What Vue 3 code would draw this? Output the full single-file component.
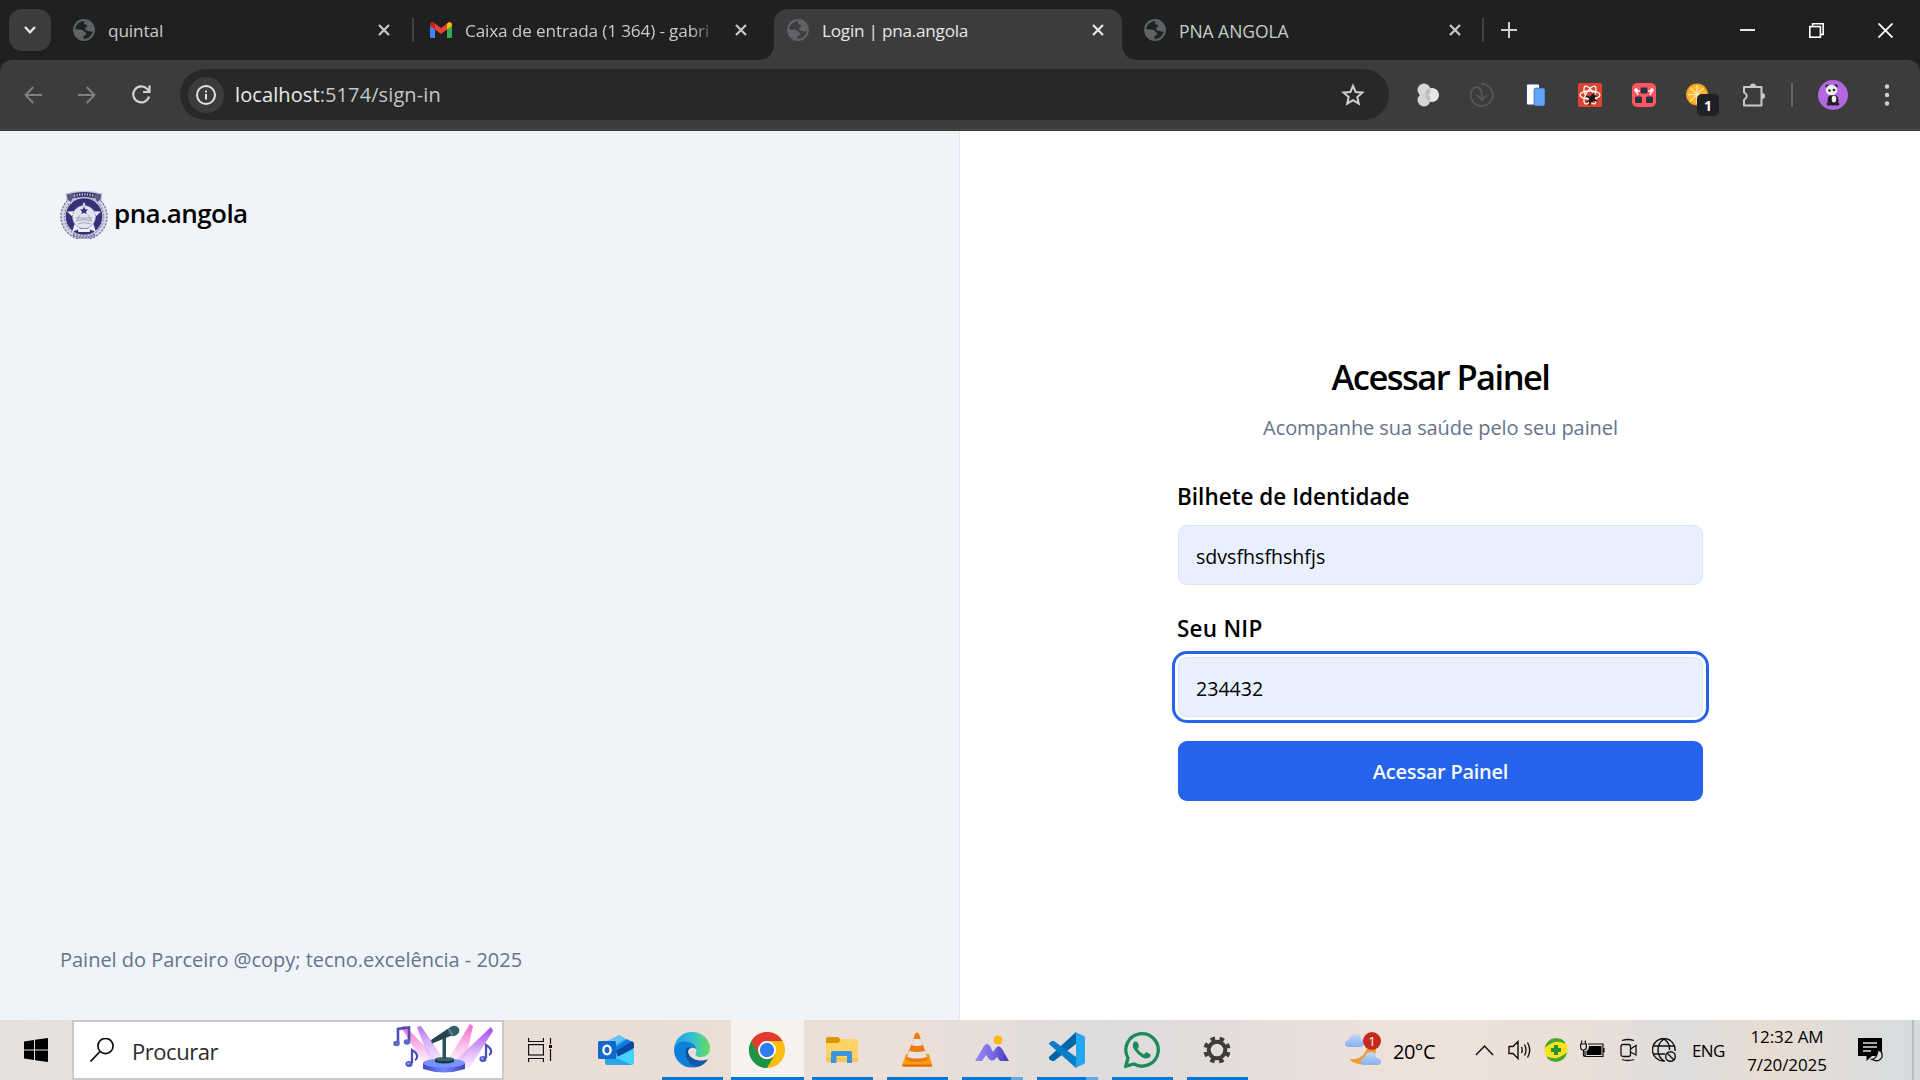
<script setup>
import { ref } from 'vue'

const identity = ref('sdvsfhsfhshfjs')
const nip = ref('234432')
</script>

<template>
  <div class="screen">
    <svg class="defs" width="0" height="0">
      <defs>
        <symbol id="globe" viewBox="0 0 22 22">
          <circle cx="11" cy="11" r="9.9" fill="none" stroke="#5f6368" stroke-width="2" />
          <path d="M11 1 A10 10 0 0 1 20.800 12 Q18 13.500 16 12 Q13 12.500 12 10 Q12 8 14 7.500 Q15 5.500 12.500 5.500 Q10 5 11.500 3 Z M1.200 10 L6.500 10.500 Q11 10.500 11.500 13 Q14 13.500 13 16 L10.500 17 L10.300 21 A10 10 0 0 1 1.200 10 Z" fill="#5f6368" />
        </symbol>
        <symbol id="close" viewBox="0 0 14 14">
          <path d="M2 2 L12 12 M12 2 L2 12" fill="none" stroke="currentColor" stroke-width="2.2" />
        </symbol>
        <symbol id="note" viewBox="0 0 14 20">
          <path d="M7 15 V2 Q12 5 12 8 Q12.500 11 10 12" fill="none" stroke="#4a4fb4" stroke-width="2.300" />
          <ellipse cx="4" cy="16" rx="3.600" ry="3" fill="#4f55bf" />
          <ellipse cx="3.500" cy="15.500" rx="1.600" ry="1.200" fill="#8e96ea" />
        </symbol>
        <linearGradient id="cloud" x1="0" y1="0" x2="0" y2="1"><stop offset="0" stop-color="#c9dcfa" /><stop offset=".5" stop-color="#a4c3f2" /><stop offset="1" stop-color="#8ab0ee" /></linearGradient>
      </defs>
    </svg>

    <header class="tabs">
      <button class="tab-search"><svg width="14" height="10" viewBox="0 0 14 10"><path d="M2 2 L7 7.300 L12 2" fill="none" stroke="#e6e6e6" stroke-width="2.300" /></svg></button>
      <div class="tab first">
        <svg class="fav"><use href="#globe" /></svg>
        <span class="tab-name">quintal</span>
        <svg class="x"><use href="#close" /></svg>
      </div>
      <i class="sep"></i>
      <div class="tab mail">
        <svg class="fav" viewBox="0 0 22 22">
          <path d="M0 5 L5 8.500 V19 H1.500 Q0 19 0 17.500 Z" fill="#4285f4" />
          <path d="M17 8.500 L22 5 V17.500 Q22 19 20.500 19 H17 Z" fill="#34a853" />
          <path d="M5 4.500 L11 9 L17 4.500 V10.500 L11 15 L5 10.500 Z" fill="#ea4335" />
          <path d="M0 5.500 Q0 3 2.300 3 Q3.500 3 5 4.500 V10.500 L0 7 Z" fill="#c5221f" />
          <path d="M17 4.500 Q18.500 3 19.700 3 Q22 3 22 5.500 V7 L17 10.500 Z" fill="#fbbc04" />
        </svg>
        <span class="tab-name faded">Caixa de entrada (1 364) - gabri</span>
        <svg class="x"><use href="#close" /></svg>
      </div>
      <div class="tab active">
        <svg class="fav"><use href="#globe" /></svg>
        <span class="tab-name">Login | pna.angola</span>
        <svg class="x"><use href="#close" /></svg>
      </div>
      <div class="tab last">
        <svg class="fav"><use href="#globe" /></svg>
        <span class="tab-name">PNA ANGOLA</span>
        <svg class="x"><use href="#close" /></svg>
      </div>
      <i class="sep"></i>
      <svg class="plus" width="16" height="16" viewBox="0 0 16 16"><path d="M8 0 V16 M0 8 H16" stroke="#d0d0d0" stroke-width="2" /></svg>
      <div class="window-controls">
        <svg width="15" height="15" viewBox="0 0 15 15"><path d="M0 7 H15" stroke="#fff" stroke-width="1.800" /></svg>
        <svg width="15" height="15" viewBox="0 0 15 15" fill="none" stroke="#fff" stroke-width="1.600"><rect x=".8" y="3.600" width="10.600" height="10.600" /><path d="M3.600 3.600 V.8 H14.200 V11.400 H11.400" /></svg>
        <svg width="15" height="15" viewBox="0 0 15 15"><path d="M.5 .5 L14.500 14.500 M14.500 .5 L.5 14.500" stroke="#fff" stroke-width="1.800" /></svg>
      </div>
    </header>

    <div class="toolbar-wrap">
      <div class="toolbar">
        <div class="nav">
          <svg width="18" height="18" viewBox="0 0 18 18" fill="none" stroke="#7e7e7e" stroke-width="2"><path d="M18 9 H2 M9.300 1 L1.500 9 L9.300 17" /></svg>
          <svg width="18" height="18" viewBox="0 0 18 18" fill="none" stroke="#7e7e7e" stroke-width="2"><path d="M0 9 H16 M8.700 1 L16.500 9 L8.700 17" /></svg>
          <svg width="19" height="19" viewBox="0 0 19 19" fill="none" stroke="#d2d2d2" stroke-width="2.200"><path d="M17 11.500 A8 8 0 1 1 15.200 4 L17.500 6.500 M17.500 .5 V7 H11" /></svg>
        </div>
        <div class="omnibox">
          <span class="info"><svg width="20" height="20" viewBox="0 0 20 20"><circle cx="10" cy="10" r="9" fill="none" stroke="#e3e3e3" stroke-width="2" /><path d="M10 9 V14.500 M10 5.500 V7.500" stroke="#e3e3e3" stroke-width="2" /></svg></span>
          <span class="url"><b>localhost</b>:5174/sign-in</span>
          <svg class="star" width="24" height="24" viewBox="0 0 24 24"><path d="M12 2.800 L14.600 9 L21.400 9.600 L16.300 14 L17.800 20.700 L12 17.200 L6.200 20.700 L7.700 14 L2.600 9.600 L9.400 9 Z" fill="none" stroke="#d0d0d0" stroke-width="2" /></svg>
        </div>
        <div class="extensions">
          <svg viewBox="0 0 24 24"><circle cx="8" cy="7" r="6.500" fill="#d8d8d8" /><circle cx="8" cy="17" r="6.500" fill="#d4d4d4" /><circle cx="16" cy="12" r="7" fill="#e6e6e6" /><path d="M9.200 11 Q10 6.500 13.500 5.600 Q15.500 9 13.200 11 Q11 13 9.200 11 Z M9.200 12.800 Q12 10.800 13.500 13 Q15.500 15.500 13.500 18.400 Q9.500 17 9.200 12.800 Z" fill="#bdbdbd" /></svg>
          <svg viewBox="0 0 24 24" fill="none" stroke="#565656" stroke-width="1.800"><path d="M11 1 A11 11 0 1 1 2 7 Q6 2 10 6 Q12 8 12 16 M7 12 L12 17 L17 12" /></svg>
          <svg viewBox="0 0 24 24"><rect x="2.500" y="1" width="13" height="21" rx="1.500" fill="#fff" stroke="#2c4e78" /><rect x="10" y="5" width="11" height="18" rx="2" fill="#62a4f7" stroke="#2e558a" stroke-width=".6" /></svg>
          <svg viewBox="0 0 24 24"><rect width="24" height="24" rx="1.500" fill="#d9432f" /><g fill="none" stroke="#fff" stroke-width="1.300"><ellipse cx="12" cy="12" rx="10" ry="4" /><ellipse cx="12" cy="12" rx="10" ry="4" transform="rotate(60 12 12)" /><ellipse cx="12" cy="12" rx="10" ry="4" transform="rotate(120 12 12)" /></g><ellipse cx="14" cy="15.500" rx="2.600" ry="4.500" transform="rotate(30 14 15.500)" fill="#1c1414" /><path d="M8 13 L19 18 M9 19 L18 13 M11 22 L16 10" stroke="#1c1414" stroke-width="1.400" /></svg>
          <svg viewBox="0 0 24 24"><rect width="24" height="24" rx="5" fill="#ff5661" /><g fill="#26343f"><rect x="8.500" y="4.500" width="7" height="6" rx="1" /><rect x="3" y="13.500" width="7" height="6.500" rx="1" /><rect x="14" y="13.500" width="7" height="6.500" rx="1" /></g><path d="M3 8 H8 M16 8 H21 M4 8 L6 12 M20 8 L18 12" stroke="#fff" stroke-width="1.500" /><circle cx="4" cy="7" r="1.800" fill="#fff" /><circle cx="20" cy="7" r="1.800" fill="#fff" /></svg>
          <span class="orange"><svg viewBox="0 0 24 24"><circle cx="11" cy="11.500" r="11" fill="#f59c1a" /><circle cx="11" cy="11.500" r="9.500" fill="#ffb52e" /><path d="M11 2 V21 M1.500 11.500 H20.500 M4.300 4.800 L17.700 18.200 M17.700 4.800 L4.300 18.200" stroke="#ffe9b8" stroke-width="1.200" /></svg><b>1</b></span>
          <svg class="puzzle" viewBox="0 0 24 24"><path d="M2 4 H19.500 V22.500 H2 V17 Q7.500 13 2 9.200 Z" fill="none" stroke="#c9c9c9" stroke-width="2" stroke-linejoin="round" /><path d="M8 3.500 A3 3 0 0 1 14 3.500 Z M20 10 A3 3 0 0 1 20 16 Z" fill="#c9c9c9" /></svg>
        </div>
        <i class="bar"></i>
        <svg class="avatar" width="30" height="30" viewBox="0 0 30 30"><circle cx="15" cy="15" r="15" fill="#b567df" /><ellipse cx="15" cy="20" rx="5.500" ry="5.500" fill="#1f1b22" /><ellipse cx="16" cy="19" rx="2.300" ry="3.500" fill="#eee" /><circle cx="9.500" cy="6.500" r="2" fill="#29252b" /><circle cx="18" cy="6" r="1.800" fill="#29252b" /><ellipse cx="13.500" cy="10" rx="5.800" ry="5.200" fill="#eee" /><ellipse cx="11.500" cy="10.500" rx="1.300" ry="1.300" fill="#29252b" /><ellipse cx="16" cy="10" rx="1.300" ry="1.300" fill="#29252b" /><ellipse cx="11" cy="24" rx="2.500" ry="1.800" fill="#29252b" /><ellipse cx="19" cy="24" rx="2.500" ry="1.800" fill="#29252b" /></svg>
        <svg class="dots" width="6" height="24" viewBox="0 0 6 24" fill="#d0d0d0"><circle cx="3" cy="3.500" r="2.200" /><circle cx="3" cy="12" r="2.200" /><circle cx="3" cy="20.500" r="2.200" /></svg>
      </div>
    </div>

    <main class="page">
      <section class="brand-panel">
        <div class="brand">
          <svg width="48" height="48" viewBox="0 0 48 48">
            <circle cx="24" cy="26" r="21" fill="#34317a" />
            <circle cx="24" cy="25.500" r="21" fill="none" stroke="#d3d4e2" stroke-width="5.500" />
            <circle cx="24" cy="25.500" r="23" fill="none" stroke="#6f6e98" stroke-width="1.200" stroke-dasharray="2 1.500" />
            <circle cx="24" cy="25.500" r="19.500" fill="none" stroke="#8f8eb0" stroke-width="1.400" stroke-dasharray="2 1.300" />
            <path d="M24 11 L28 20 L41 20.500 L32 29 L36 41 L24 36 L12 41 L16 29 L7 20.500 L20 20 Z" fill="#eef0f7" />
            <circle cx="24" cy="26" r="11.500" fill="#e1e3ed" stroke="#8c8cb0" stroke-width="1" stroke-dasharray="2 1" />
            <path d="M24 15.500 L25.200 18.200 L28 18.500 L26 20.500 L26.500 23 L24 21.800 L21.500 23 L22 20.500 L20 18.500 L22.800 18.200 Z" fill="#34317a" />
            <path d="M16 27 H32 M16 30 Q24 27 32 30 M18 33 Q24 30 31 33 M20 24 L17 29 M28 24 L31 29" fill="none" stroke="#9c9dba" stroke-width=".9" />
            <path d="M6 3 Q24 -2 42 3 L41 9 L37 12 L35 8 Q24 5 13 8 L11 12 L7 9 Z" fill="#5a5988" stroke="#c8c9dc" stroke-width="1.200" />
            <path d="M14 4.800 Q24 2 34 4.800" stroke="#29285e" stroke-width="4" fill="none" />
            <path d="M14 4.800 Q24 2 34 4.800" stroke="#c9cadb" stroke-width="2.500" stroke-dasharray="1.200 1.400" fill="none" />
            <rect x="18" y="38" width="12" height="3" rx="1" fill="#f1f2f8" />
            <path d="M13 44 Q24 49 35 44" stroke="#6a6994" stroke-width="2" stroke-dasharray="2 1" fill="none" />
          </svg>
          <span>pna.angola</span>
        </div>
        <footer>Painel do Parceiro @copy; tecno.excelência - 2025</footer>
      </section>
      <section class="form-panel">
        <form @submit.prevent>
          <h1>Acessar Painel</h1>
          <p>Acompanhe sua saúde pelo seu painel</p>
          <label for="identity">Bilhete de Identidade</label>
          <input id="identity" v-model="identity" type="text" />
          <label for="nip" class="second">Seu NIP</label>
          <input id="nip" v-model="nip" class="focused" type="text" />
          <button class="submit">Acessar Painel</button>
        </form>
      </section>
    </main>

    <footer class="taskbar">
      <div class="start"><svg width="24" height="24" viewBox="0 0 24 24"><path d="M0 3.400 L10 2 V11.500 H0 Z M11 1.800 L24 0 V11.500 H11 Z M0 12.500 H10 V22 L0 20.600 Z M11 12.500 H24 V24 L11 22.200 Z" /></svg></div>
      <div class="search">
        <svg width="24" height="24" viewBox="0 0 24 24" fill="none" stroke="#111" stroke-width="1.700"><circle cx="15.500" cy="8" r="7.600" /><path d="M10 13.500 L.5 23.500" /></svg>
        <span>Procurar</span>
        <svg class="promo" width="102" height="52" viewBox="0 0 102 52">
          <defs>
            <linearGradient id="pinkBeam" x1="0" y1="0" x2="0" y2="1"><stop stop-color="#f560c8" /><stop offset="1" stop-color="#fde8fa" stop-opacity=".6" /></linearGradient>
            <linearGradient id="violetBeam" x1="0" y1="0" x2="0" y2="1"><stop stop-color="#a13df0" /><stop offset="1" stop-color="#f8e6fd" stop-opacity=".6" /></linearGradient>
            <linearGradient id="stage" x1="0" y1="0" x2="1" y2="0"><stop stop-color="#4748c4" /><stop offset=".5" stop-color="#6e86ff" /><stop offset="1" stop-color="#4344bb" /></linearGradient>
          </defs>
          <path d="M8 4 L12 3 L46 38 L30 40 Z" fill="url(#pinkBeam)" />
          <path d="M24 4 L28 3 L52 38 L38 42 Z" fill="url(#violetBeam)" opacity=".75" />
          <path d="M77 1 L80 3 L72 40 L54 38 Z" fill="url(#pinkBeam)" />
          <path d="M98 4 L100 8 L76 46 L62 38 Z" fill="url(#violetBeam)" />
          <path d="M30 40 V46 Q51 53 72 46 V40 Z" fill="url(#stage)" /><ellipse cx="51" cy="40" rx="21" ry="4.500" fill="#7694ff" />
          <path d="M42 36 V39 Q51 42 61 39 V36 Z" fill="#173b42" /><ellipse cx="51.500" cy="36" rx="9.500" ry="2" fill="#3c6870" />
          <path d="M49.500 14 H53 V36 H49.500 Z" fill="#28525a" />
          <path d="M38 17 L56 5 L60 12 L39 20.500 Z" fill="#23444c" /><ellipse cx="60.500" cy="8" rx="6" ry="5" transform="rotate(-25 60.500 8)" fill="#355e66" /><path d="M55 5 L60 12.500" stroke="#8fb0b5" stroke-width="1" />
          <path d="M5 20 V6 L16 4.500 V18" fill="none" stroke="#4a4fb4" stroke-width="2.600" /><ellipse cx="3.500" cy="20.500" rx="3.300" ry="2.800" fill="#5f66cc" /><ellipse cx="14" cy="19" rx="3.300" ry="2.800" fill="#5f66cc" />
          <use href="#note" x="12" y="25" width="14" height="20" /><use href="#note" x="86" y="20" width="14" height="20" />
        </svg>
      </div>
      <div class="apps">
        <div class="app taskview"><svg width="24" height="24" viewBox="0 0 24 24" fill="none" stroke="#111" stroke-width="1.200"><path d="M.6 0 V3.500 H15.400 V0 M.6 24 V20.500 H15.400 V24 M22.500 0 V6 M22.500 11 V23" /><rect x=".6" y="6.600" width="14.800" height="10.400" /><rect x="21" y="7" width="3" height="3" fill="#111" stroke="none" /></svg></div>
        <div class="app outlook"><svg width="36" height="36" viewBox="0 0 36 36"><path d="M7 14 L21 3 L35 12 V30 Q35 33 32 33 H10 Q7 33 7 30 Z" fill="#45aef0" /><path d="M7 10 L21 3 L27 6 L12 17 Z" fill="#63c4f5" /><path d="M14 17 L29 7 L34 10 L18 22 Z" fill="#117bdd" /><path d="M18 19 L34 9 L36 11 V16 L20 25 Z" fill="#0a4ba1" /><path d="M17 26 L36 17 V30 Q36 33 33 33 H16 Z" fill="#44d3f8" /><path d="M7 24 L19 26 L34 33 H10 Q7 33 7 30 Z" fill="#2aa5e8" /><rect x="0" y="9" width="18" height="18" rx="1.500" fill="#1368c9" /><ellipse cx="9" cy="18" rx="3.600" ry="4.400" fill="none" stroke="#fff" stroke-width="2.400" /></svg></div>
        <div class="app open"><svg width="36" height="36" viewBox="0 0 36 36">
          <defs><linearGradient id="edgeTop"><stop stop-color="#269ee5" /><stop offset=".5" stop-color="#31bfd8" /><stop offset="1" stop-color="#6adf55" /></linearGradient><linearGradient id="edgeSide" x1="0" y1="0" x2="0" y2="1"><stop stop-color="#114a8b" /><stop offset="1" stop-color="#0f5eb0" /></linearGradient></defs>
          <path d="M0 17 C1 6 9 0 18 0 C29 0 36 8 36 16 C36 22 32 25 27 25 C22 25 21 23 22 21 C24 17 20 13 14 12 C7 11 2 14 0 17 Z" fill="url(#edgeTop)" />
          <path d="M0 18 C1 11 8 8 14 10 C19 11 22 14 22 17 C18 14 14 17 13 21 C12 28 17 34 23 35 C10 38 0 29 0 18 Z" fill="#0c7fd9" />
          <path d="M13 16 C9 23 15 35 23 35 C28 34 32 31 34 27 C29 30 16 29 14 20 C14 18 15 16 17 15 Z" fill="url(#edgeSide)" />
        </svg></div>
        <div class="app open chrome"><svg width="36" height="36" viewBox="0 0 36 36"><circle cx="18" cy="18" r="18" fill="#fbbc10" /><path d="M2.400 9 A18 18 0 0 1 33.600 9 H18 L9.600 22.500 Z" fill="#e33b2e" /><path d="M2.400 9 L10 22.500 A9 9 0 0 0 25.800 22.500 L18 36 A18 18 0 0 1 2.400 9 Z" fill="#1e9448" /><circle cx="18" cy="18" r="9" fill="#fff" /><circle cx="18" cy="18" r="7.200" fill="#2e7df0" /></svg></div>
        <div class="app open"><svg width="36" height="36" viewBox="0 0 36 36"><path d="M2 7 Q2 5 4 5 H14 L18 9 L15 12 H2 Z" fill="#dc9600" /><path d="M2 11 H14 L18 7 H32 Q34 7 34 9 V28 Q34 30 32 30 H4 Q2 30 2 28 Z" fill="#fdd368" /><path d="M2 26 H34 V28 Q34 30 32 30 H4 Q2 30 2 28 Z" fill="#f8c650" /><path d="M7 21 Q7 19 9 19 H26 Q28 19 28 21 V31 H23 V24 H12.500 V31 H7 Z" fill="#3996de" /></svg></div>
        <div class="app open"><svg width="36" height="36" viewBox="0 0 36 36"><path d="M7 22 H30 L33 33 Q33 34.500 32 34.500 H4 Q3 34.500 3.300 33 Z" fill="#fa9b11" /><path d="M3.500 32.500 H33 V34.500 H3.500 Z" fill="#d96d04" /><path d="M16 2 Q18 -1 20 2 L29 27 Q27 30 18 30 Q9 30 7 27 Z" fill="#ef7912" /><path d="M14.200 7 H21.800 L24 13 Q18 15 12 13 Z M10.200 19 Q18 21 26 19 L28 25 Q18 28 8 25 Z" fill="#e3e3df" /></svg></div>
        <div class="app open multi"><svg width="36" height="36" viewBox="0 0 36 36"><defs><linearGradient id="peak"><stop stop-color="#9b8cf3" /><stop offset=".6" stop-color="#7261df" /><stop offset="1" stop-color="#4432ba" /></linearGradient></defs><path d="M1 29 L10 14 Q13 10 16 14 L19 20 L22 16 Q25 12 28 17 L35 29 H26 L23 25 Q19 31 15 27 L12 23 L8 29 Z" fill="url(#peak)" /><circle cx="24" cy="8" r="4.500" fill="#fdb813" /></svg></div>
        <div class="app open multi"><svg width="36" height="36" viewBox="0 0 36 36"><path d="M27 0 L0 25 V27 L3 29 H5 L27 12 Z" fill="#0065a9" /><path d="M0 11 L3 9 H5 L27 25 V36 L0 12 Z" fill="#087ecb" /><path d="M26 0 L34 3.500 Q36 4.500 36 6 V30 Q36 31.500 34 32.500 L26 36 Q27 35 27 33 V3 Q27 1 26 0 Z" fill="#25a6f2" /></svg></div>
        <div class="app open"><svg width="36" height="36" viewBox="0 0 36 36"><path d="M1.800 34.200 L4 26 A16.200 16.200 0 1 1 10 32 Z" fill="none" stroke="#1c8b59" stroke-width="3.300" /><path d="M10 10 Q12 8 14 11 L15 14 Q15 15 13.500 17 Q16 21 20 22.500 L22 20 L26 22 Q28 24 24.500 26 Q20 28 13.500 21.500 Q6 14 10 10 Z" fill="#1c8b59" /></svg></div>
        <div class="app open"><svg width="36" height="36" viewBox="0 0 36 36" fill="none" stroke="#3c3c3c"><circle cx="18" cy="18" r="8.300" stroke-width="4" /><circle cx="18" cy="18" r="11.600" stroke-width="4" stroke-dasharray="4.500 4.610" stroke-dashoffset="-2.300" /></svg></div>
      </div>
      <div class="weather">
        <svg width="37" height="36" viewBox="0 0 37 36"><path d="M31 15 A15.500 15.500 0 0 1 4 27 Q19 29 23 13 Z" fill="#f29a2e" /><path d="M4 15 Q0 15 0 11.500 Q0 8 4 8 Q6 0 12 2 Q16 3 16 7 Q20 8 19 12 Q18 15 15 15 Z" fill="url(#cloud)" /><path d="M19 33 Q15.500 33 15.500 29.500 Q15.500 26 19 26 Q21 19 27 20 Q31 21 31.500 26 Q36 26 36 30 Q36 33 32 33 Z" fill="url(#cloud)" /></svg>
        <b>1</b><span>20°C</span>
      </div>
      <div class="tray">
        <svg class="t-chevron" width="19" height="12" viewBox="0 0 19 12"><path d="M1 11 L9.500 2 L18 11" fill="none" stroke="#111" stroke-width="1.500" /></svg>
        <svg class="t-sound" width="24" height="24" viewBox="0 0 24 24" fill="none" stroke="#111" stroke-width="1.400"><path d="M1 8.500 H5 L10 3.500 V20.500 L5 15.500 H1 Z M13.500 9 Q15 12 13.500 15 M16.500 6.500 Q19.500 12 16.500 17.500 M19.500 4.500 Q24 12 19.500 19.500" /></svg>
        <svg class="t-plus" width="24" height="24" viewBox="0 0 24 24"><circle cx="12" cy="12" r="11.500" fill="#ffdf1f" /><path d="M2 8 A11 11 0 0 1 21 5 Q14 1.500 8 4.500 Q4.500 6 2 8 Z M22 16 A11 11 0 0 1 3 19 Q10 22.500 16 19.500 Q19.500 18 22 16 Z" fill="#45a735" stroke="#45a735" stroke-width="1.200" /><path d="M12 7 V17 M7 12 H17" stroke="#219232" stroke-width="4" /></svg>
        <svg class="t-battery" width="25" height="24" viewBox="0 0 25 24"><path d="M8 6 H23 V18.500 H5 V13 M24 10 V14.500" fill="none" stroke="#111" stroke-width="1.200" /><path d="M9 8 H21.500 V17 H6.500 V13 Q9 12 9 8 Z" /><path d="M0.600 6 H6.400 V9 Q6.400 12 3.500 12 Q.6 12 .6 9 Z M1.700 2.500 V6 M5.300 2.500 V6 M3.500 12 V18 H6" fill="none" stroke="#111" stroke-width="1.200" /></svg>
        <svg class="t-camera" width="17" height="24" viewBox="0 0 17 24" fill="none" stroke="#111" stroke-width="1.300"><rect x="1" y="6.500" width="9.500" height="12" rx="2" /><path d="M10.500 11 L16 7.500 V17 L10.500 14 M2 2.500 Q8 .5 14 2.500 M2 21.500 Q8 23.500 14 21.500" /></svg>
        <svg class="t-net" width="24" height="24" viewBox="0 0 24 24" fill="none" stroke="#111" stroke-width="1.400"><path d="M13 23 A11.300 11.300 0 1 1 23 13 M1.500 8 H22.500 M1.500 16 H13 M12 1 Q6 5 6 12 Q6 19 12 23 M12 1 Q18 5 17.500 12" /><circle cx="18.500" cy="18.500" r="4.800" /><path d="M15 15 L22 22" /></svg>
        <span class="lang">ENG</span>
        <div class="clock"><span>12:32 AM</span><span>7/20/2025</span></div>
        <svg class="t-note" width="26" height="26" viewBox="0 0 26 26"><path d="M0 1 H24 V19 H14 L8.500 24 V19 H0 Z" /><path d="M5 6 H19 M5 10 H19 M5 14 H13" stroke="#e4ded8" stroke-width="1.400" /><path d="M20 13 Q25 14 24 20 Q21 26 14 22.500 Q19 22 20 13 Z" fill="#ddd9d5" stroke="#111" stroke-width="1.300" /></svg>
        <i class="desktop-edge"></i>
      </div>
    </footer>
  </div>
</template>

<style>
html, body { margin: 0; overflow: hidden; background: #fff; }
</style>

<style scoped>
.screen { width: 1920px; height: 1080px; display: flex; flex-direction: column; overflow: hidden; font-family: "Open Sans", "Noto Sans", sans-serif; color: #000; }
.screen * { box-sizing: border-box; }
.screen svg { display: block; flex: none; }
.screen .defs { position: absolute; }
button { border: 0; padding: 0; font-family: inherit; }

.tabs { height: 60px; flex: none; display: flex; align-items: center; background: #1f2120; color: #c9cbca; }
.tab-search { width: 42px; height: 42px; margin-left: 9px; border-radius: 13px; background: #3c3c3c; display: flex; align-items: center; justify-content: center; flex: none; }
.tab { height: 42px; display: flex; align-items: center; position: relative; flex: none; }
.tab.first { width: 361px; padding-left: 22px; }
.tab.mail { width: 360px; padding-left: 16px; }
.tab.active { width: 348px; height: 51px; align-self: flex-end; padding: 0 0 9px 13px; background: #3c3c3c; border-radius: 14px 14px 0 0; color: #e6e6e6; }
.tab.last { width: 360px; padding-left: 22px; }
.tab.active::before, .tab.active::after { content: ""; position: absolute; bottom: 0; width: 14px; height: 14px; }
.tab.active::before { left: -14px; background: radial-gradient(circle at 0 0, transparent 13.500px, #3c3c3c 14px); }
.tab.active::after { right: -14px; background: radial-gradient(circle at 100% 0, transparent 13.500px, #3c3c3c 14px); }
.fav { width: 22px; height: 22px; }
.tab-name { margin-left: 13px; font-size: 17.200px; line-height: 26px; height: 26px; padding-top: 1px; white-space: nowrap; letter-spacing: -.25px; flex: none; width: 250px; }
.tab.first .tab-name { width: 256px; letter-spacing: -.1px; }
.tab.mail .tab-name { margin-left: 13px; width: 251px; letter-spacing: -.15px; }
.tab.last .tab-name { font-size: 17.500px; letter-spacing: -.05px; }
.faded { mask-image: linear-gradient(90deg, #000 225px, transparent 254px); }
.x { width: 14px; height: 14px; margin-left: 13px; }
.tab.mail .x { margin-left: 18px; }
.tab.active .x { margin-left: 19px; }
.tab.last .x { margin-left: 19px; }
.sep { width: 2px; height: 24px; background: #414342; flex: none; }
.plus { margin-left: 17px; }
.window-controls { display: flex; gap: 54px; margin-left: auto; margin-right: 27px; }

.toolbar-wrap { height: 71px; flex: none; background: #1f2120; }
.toolbar { height: 71px; background: #3c3c3c; border-bottom: 1px solid #383838; box-shadow: inset 0 -1px #4a4a4a; border-radius: 12px 12px 0 0; display: flex; align-items: center; padding: 0 0 1px 24px; }
.nav { display: flex; width: 156px; gap: 36px; align-items: center; }
.omnibox { width: 1209px; height: 51px; border-radius: 26px; background: #282828; display: flex; align-items: center; padding-left: 8px; flex: none; }
.info { width: 36px; height: 36px; border-radius: 50%; background: #3c3c3c; display: flex; align-items: center; justify-content: center; }
.url { margin-left: 11px; font-size: 20px; color: #c3c7c6; letter-spacing: .1px; line-height: 30px; }
.url b { font-weight: 400; color: #ececec; }
.star { margin: 0 24px 0 auto; }
.extensions { display: flex; margin-left: 27px; gap: 30px; }
.extensions svg { width: 24px; height: 24px; }
.extensions .puzzle { margin-left: 2px; }
.orange { position: relative; }
.orange b { position: absolute; left: 11px; top: 11px; width: 22px; height: 22px; border-radius: 5px; background: #202124; color: #fff; font-size: 14px; line-height: 23px; text-align: center; }
.bar { width: 2px; height: 24px; background: #656565; margin-left: 25px; }
.avatar { margin-left: 25px; }
.dots { margin-left: 36px; }

.page { height: 889px; display: flex; flex: none; }
.brand-panel { width: 960px; padding: 60px; background: #f0f4f9; border-right: 1px solid #e2e8f0; display: flex; flex-direction: column; justify-content: space-between; }
.brand { display: flex; align-items: center; height: 48px; font-size: 26px; font-weight: 600; }
.brand span { margin: -4px 0 0 6px; letter-spacing: -.55px; }
.brand-panel footer { font-size: 20px; line-height: 30px; height: 30px; margin-bottom: -15px; color: #64748b; letter-spacing: -.02px; white-space: nowrap; }
.form-panel { width: 960px; display: flex; justify-content: center; }
form { width: 525px; display: flex; flex-direction: column; margin: 219px 0 0 1px; }
h1 { margin: 0; height: 54px; line-height: 54px; font-size: 34.500px; font-weight: 600; letter-spacing: -1.550px; text-align: center; }
p { margin: 9px 0 0; height: 30px; line-height: 30px; font-size: 20px; letter-spacing: -.08px; text-align: center; color: #64748b; }
label { font-size: 22.500px; font-weight: 600; line-height: 30px; height: 30px; margin-top: 39px; margin-left: -1px; letter-spacing: 0; }
input { width: 525px; height: 60px; flex: none; margin: 13px 0 0; padding: 2px 18px 0 17px; border: 1px solid #dce4f1; border-radius: 9px; background: #e8effd; font-family: inherit; font-size: 19.600px; color: #000; outline: none; }
label.second { margin-top: 29px; letter-spacing: .25px; }
.second + input { margin-top: 13px; }
.focused { box-shadow: 0 0 0 3px #fff, 0 0 0 6px #2563eb; }
.submit { height: 60px; margin-top: 24px; padding-top: 1px; border-radius: 9px; background: #2563eb; color: #f8fafc; font-size: 20px; font-weight: 600; letter-spacing: -.25px; }

.taskbar { height: 60px; flex: none; display: flex; background: linear-gradient(90deg, #e4e2e0 0, #e7dfda 300px, #eaddd6 520px, #ecdfd8 900px, #dddcdc 1110px, #e5dddb 1240px, #eee1da 1400px, #ecdfd7 1580px, #dddddd 1680px, #e9ddd2 1770px, #dcdcdb 1860px, #d6dcdf 1920px); }
.start { width: 72px; display: flex; align-items: center; justify-content: center; }
.search { width: 432px; border: 2px solid #c9c9c9; background: #fff; display: flex; align-items: center; padding-left: 16px; font-size: 22px; color: #2b2b2b; }
.search span { margin: 2px 0 0 18px; letter-spacing: -.45px; }
.promo { margin: -2px 7px 0 auto; }
.apps { display: flex; }
.app { width: 75px; padding-right: 2px; display: flex; align-items: center; justify-content: center; position: relative; flex: none; }
.taskview { width: 73px; }
.outlook { width: 78px; padding-right: 0; }
.app.open::after { content: ""; position: absolute; bottom: 0; left: 7px; width: 61px; height: 3px; background: #0078d7; }
.app.multi::after { background: linear-gradient(90deg, #0078d7 49px, #63a9e4 49px); }
.app.chrome { width: 73px; margin: 0 1px; background: #f7f2ef; }
.app.chrome::after { left: 0; width: 73px; }
.weather { position: relative; display: flex; align-items: center; margin-left: 90px; width: 92px; flex: none; }
.weather span { margin-left: 11px; font-size: 20px; letter-spacing: -.5px; padding-top: 2px; }
.weather b { position: absolute; left: 18px; top: 12px; width: 18px; height: 18px; border-radius: 50%; background: #c42b1c; color: #fff; font-weight: 400; font-size: 13px; line-height: 18px; text-align: center; }
.tray { display: flex; align-items: center; flex: 1; }
.t-chevron { margin-left: 38px; }
.t-sound { margin-left: 14px; }
.t-plus { margin-left: 12px; }
.t-battery { margin-left: 12px; }
.t-camera { margin-left: 15px; }
.t-net { margin-left: 15px; }
.lang { margin-left: 16px; width: 35px; font-size: 17px; letter-spacing: -.6px; padding-top: 1px; }
.clock { display: flex; flex-direction: column; width: 96px; margin-left: 12px; padding-top: 1px; text-align: center; font-size: 17px; line-height: 28px; letter-spacing: -.1px; white-space: nowrap; }
.t-note { margin-left: 23px; }
.desktop-edge { width: 2px; height: 60px; background: #b9bcbd; margin-left: auto; margin-right: 6px; }
</style>
